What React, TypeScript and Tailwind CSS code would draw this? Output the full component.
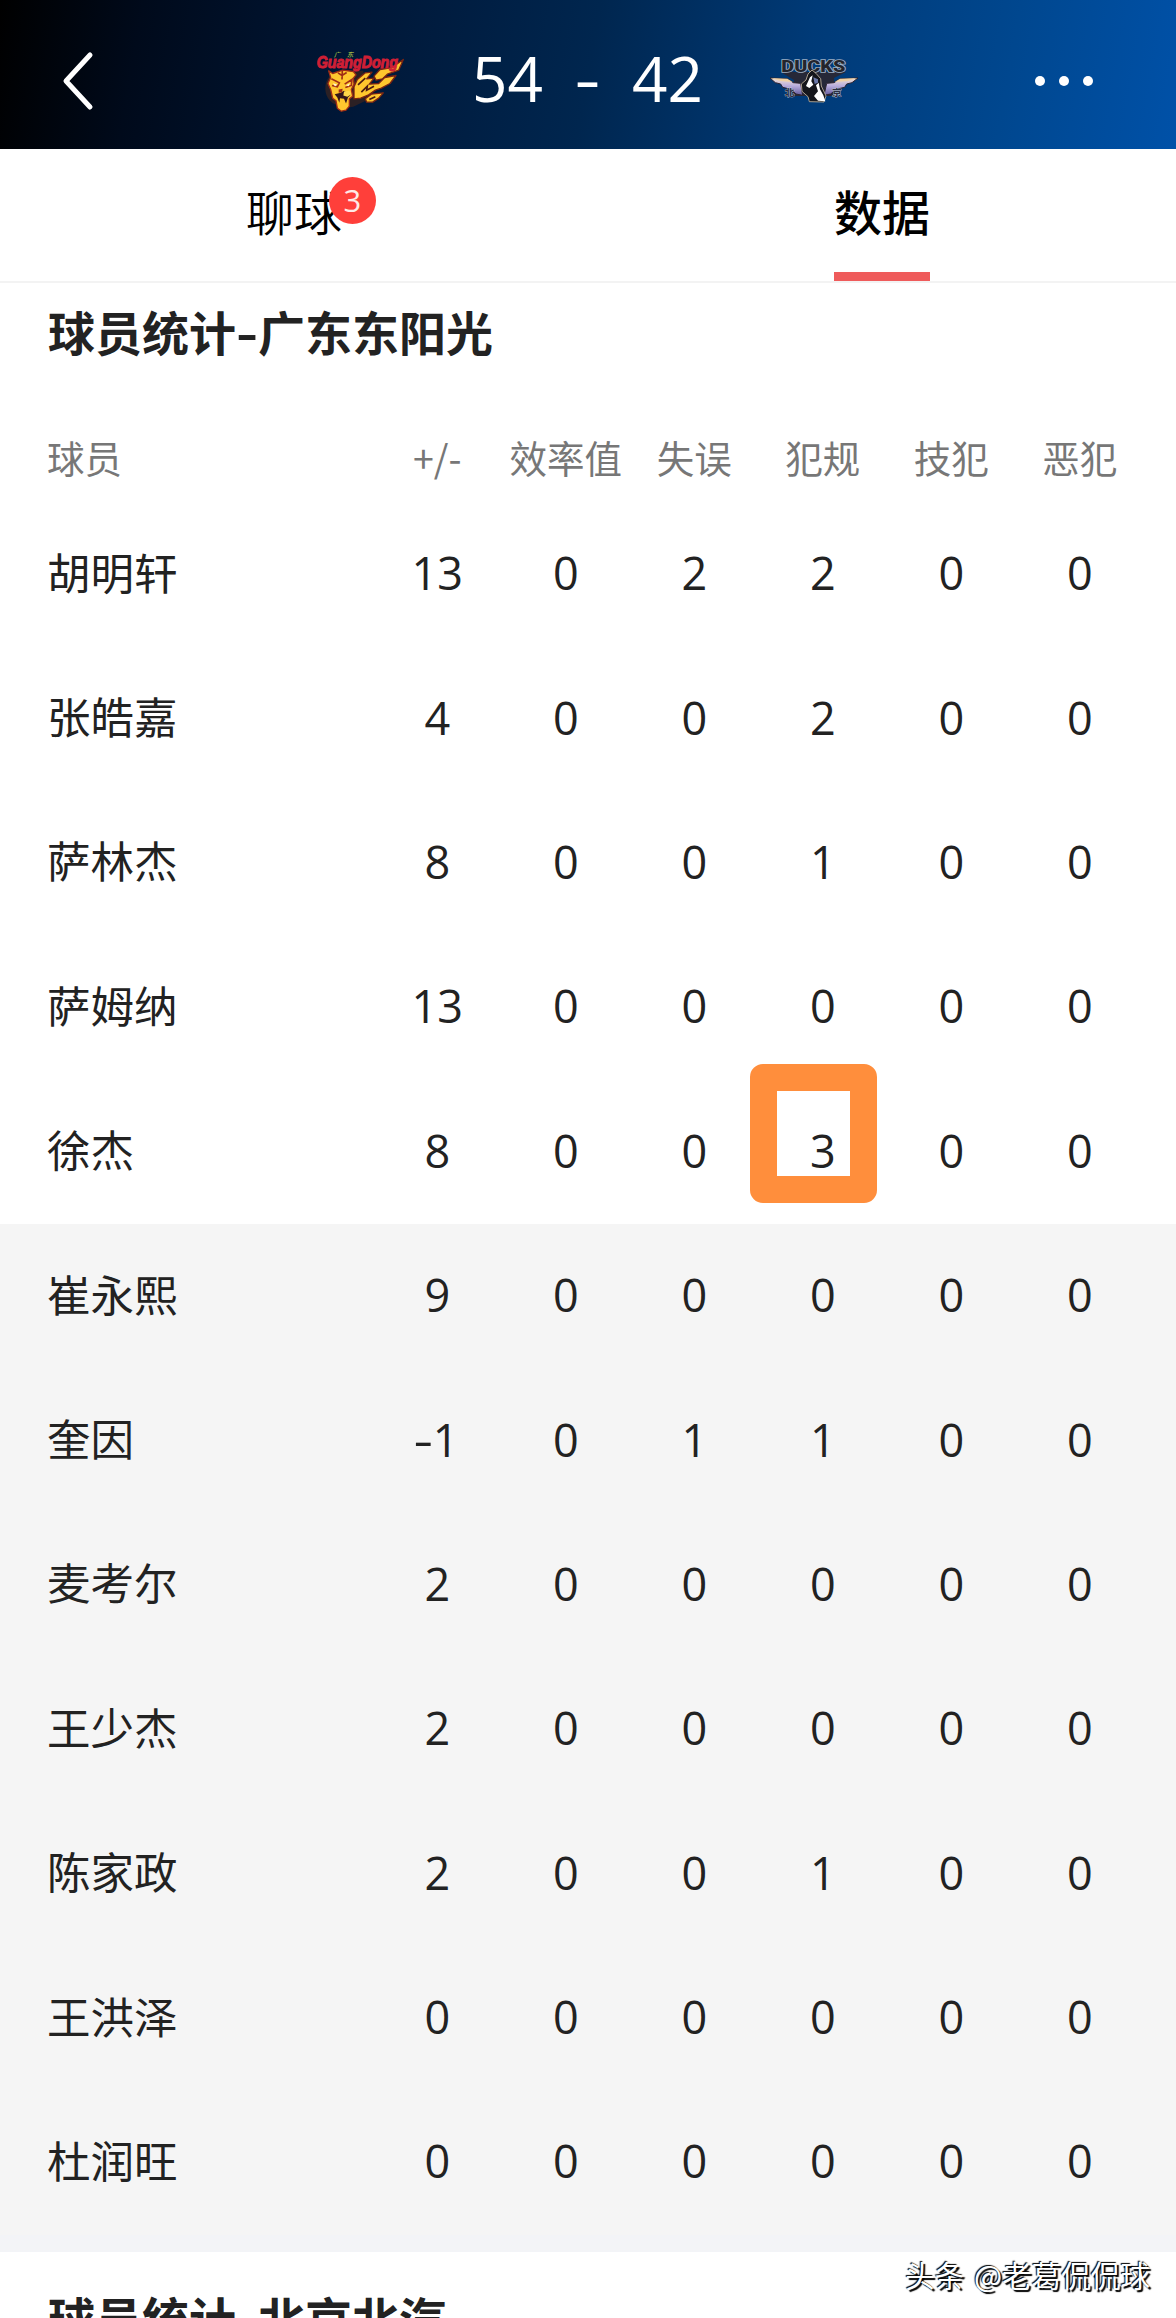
const columns = ['+/-', '效率值', '失误', '犯规', '技犯', '恶犯'];

const starters = [
  { name: '胡明轩', stats: [13, 0, 2, 2, 0, 0] },
  { name: '张皓嘉', stats: [4, 0, 0, 2, 0, 0] },
  { name: '萨林杰', stats: [8, 0, 0, 1, 0, 0] },
  { name: '萨姆纳', stats: [13, 0, 0, 0, 0, 0] },
  { name: '徐杰', stats: [8, 0, 0, 3, 0, 0], highlight: 3 },
];

const bench = [
  { name: '崔永熙', stats: [9, 0, 0, 0, 0, 0] },
  { name: '奎因', stats: [-1, 0, 1, 1, 0, 0] },
  { name: '麦考尔', stats: [2, 0, 0, 0, 0, 0] },
  { name: '王少杰', stats: [2, 0, 0, 0, 0, 0] },
  { name: '陈家政', stats: [2, 0, 0, 1, 0, 0] },
  { name: '王洪泽', stats: [0, 0, 0, 0, 0, 0] },
  { name: '杜润旺', stats: [0, 0, 0, 0, 0, 0] },
];

type Player = { name: string; stats: number[]; highlight?: number };

function TigersLogo() {
  return (
    <svg width={90} height={67} viewBox="45 40 270 200" className="shrink-0">
      <ellipse cx="122" cy="160" rx="46" ry="52" fill="#2b2024" />
      <path d="M130 110 L190 108 L200 196 L160 216 L130 220 Z" fill="#2b2024" />
      {/* flames */}
      <g fill="#ffc72e" stroke="#7a2412" strokeWidth="4" strokeLinejoin="round">
        <path d="M222 124 L240 104 L276 98 L310 74 L296 106 L262 118 L248 132 L228 136 Z" />
        <path d="M162 156 L172 134 L196 114 L216 112 L200 132 L222 130 L208 148 L236 146 L254 128 L288 122 L270 146 L244 160 L226 166 L206 180 L182 190 L162 192 Z" />
        <path d="M196 192 L214 178 L250 174 L236 190 L218 202 L200 202 Z" />
      </g>
      <path d="M184 172 L202 154 L200 166 L222 154 M174 150 L196 130 M208 194 L226 186" fill="none" stroke="#4a1a12" strokeWidth="5" />
      {/* head */}
      <path d="M86 108 L98 116 L128 106 L160 110 L168 120 L160 130 L162 148 L154 164 L158 184 L148 192 L148 214 L138 226 L124 229 L112 220 L108 198 L98 190 L92 164 L84 146 L92 128 Z" fill="#ffc72e" stroke="#a02e16" strokeWidth="4" strokeLinejoin="round" />
      <path d="M114 114 L126 122 L140 113 M127 108 L126 134 M94 132 L118 144 L112 156 L96 152 M134 148 L156 134 L154 152 L136 158" fill="none" stroke="#a02e16" strokeWidth="5" />
      <path d="M104 178 L122 174 L132 168 L152 180 L144 188 L138 206 L132 192 L120 190 L118 204 L112 188 Z" fill="#35161a" />
      <path d="M132 170 L148 168 L154 178 L142 186 L130 182 Z" fill="#ffd84a" />
      <path d="M116 164 L128 162 L126 172 L116 174 Z" fill="#a02e16" />
      <path d="M99 145 L111 149 L105 155 Z M138 151 L150 145 L146 154 Z" fill="#fff6d8" />
      <text x="102" y="67" textLength="58" fontSize="19" fill="#d8e84a" fontStyle="italic" fontFamily="'Noto Sans CJK SC', sans-serif">广 东</text>
      <text x="50" y="99" textLength="244" lengthAdjust="spacingAndGlyphs" fontSize="47" fontWeight="700" fontStyle="italic" fill="#d01f35" stroke="#d01f35" strokeWidth="3" fontFamily="'Liberation Sans', sans-serif">GuangDong</text>
    </svg>
  );
}

function DucksLogo() {
  return (
    <svg width={90} height={50} viewBox="57 70 270 150" className="shrink-0">
      {/* wings */}
      <defs>
        <linearGradient id="wing" x1="0" y1="0" x2="0" y2="1">
          <stop offset="0" stopColor="#f3e2d0" />
          <stop offset="0.45" stopColor="#b9aede" />
          <stop offset="1" stopColor="#62599b" />
        </linearGradient>
      </defs>
      <path d="M92 118 L288 118 L252 136 L256 190 L126 190 L132 142 Z" fill="#262838" />
      <g fill="url(#wing)" stroke="#2b2430" strokeWidth="3">
        <path d="M60 136 L112 138 L130 150 L152 152 L158 188 L138 184 L122 170 L98 164 L92 154 L76 150 Z" />
        <path d="M324 136 L270 138 L252 150 L230 152 L222 188 L242 184 L258 170 L284 164 L290 154 L306 150 Z" />
      </g>
      <path d="M62 136 L112 138 L128 148 L92 145 Z M322 136 L270 138 L254 148 L292 145 Z" fill="#efd2a6" />
      <text x="94" y="118" textLength="192" lengthAdjust="spacingAndGlyphs" fontSize="50" fontWeight="900" fill="#24252c" stroke="#9fb0c4" strokeWidth="5" paintOrder="stroke" fontFamily="Roboto, sans-serif">DUCKS</text>
      {/* duck */}
      <path d="M174 124 L186 112 L198 122 L212 138 L214 160 L228 190 L222 208 L178 207 L174 192 L156 176 L154 154 L168 142 Z" fill="#15161c" stroke="#c5b7a0" strokeWidth="2.5" />
      <path d="M180 134 L188 128 L184 146 L190 156 L178 166 L168 160 Z M198 158 L206 150 L210 170 L220 188 L226 206 L204 204 L192 190 L204 176 Z" fill="#fff" />
      <path d="M190 134 L204 140 L204 150 L194 154 Z" fill="#6b78a8" />
      <text x="104" y="190" fontSize="29" fontWeight="700" fill="#2a2f42" stroke="#c8cede" strokeWidth="2" paintOrder="stroke" fontFamily="'Noto Sans CJK SC', sans-serif">北</text>
      <text x="246" y="190" fontSize="29" fontWeight="700" fill="#2a2f42" stroke="#c8cede" strokeWidth="2" paintOrder="stroke" fontFamily="'Noto Sans CJK SC', sans-serif">京</text>
    </svg>
  );
}

function ScoreBar() {
  return (
    <header className="flex items-center h-[149px] pt-[13px] text-white bg-[linear-gradient(100deg,#000_0%,#000a1b_12%,#001737_30%,#00264f_50%,#003a77_68%,#00478f_85%,#0051a8_100%)]">
      <svg width={35} height={60} viewBox="0 0 35 60" fill="none" stroke="#fff" strokeWidth={5} strokeLinecap="round" strokeLinejoin="round" className="ml-[60px] shrink-0">
        <path d="M30 4 L6 30 L30 56" />
      </svg>
      <div className="ml-[220px] flex items-center">
        <TigersLogo />
      </div>
      <div className="ml-[67px] mb-[6px] flex items-center h-[70px] text-[62px] leading-[70px] font-['Open_Sans','Noto_Sans',sans-serif]">
        <span className="w-[71px]">54</span>
        <span className="w-[89px] text-center scale-x-[1.3]">-</span>
        <span className="w-[71px]">42</span>
      </div>
      <div className="ml-[66px] flex items-center">
        <DucksLogo />
      </div>
      <div className="ml-auto mr-[83px] flex gap-[14px]">
        <i className="w-[10px] h-[10px] rounded-full bg-white" />
        <i className="w-[10px] h-[10px] rounded-full bg-white" />
        <i className="w-[10px] h-[10px] rounded-full bg-white" />
      </div>
    </header>
  );
}

function Tabs() {
  return (
    <nav className="flex h-[134px] border-b-2 border-[#f3f3f3] text-[48px] leading-[70px] text-black">
      <div className="flex-1 flex justify-center pt-[26px]">
        <div className="relative h-[70px] [font-weight:350]">
          聊球
          <span className="absolute left-[83px] top-[2px] w-[47px] h-[47px] rounded-full bg-[#ff3f3a] text-[#ffe9e6] text-[31px] leading-[46px] text-center font-normal font-['Open_Sans','Noto_Sans',sans-serif]">3</span>
        </div>
      </div>
      <div className="flex-1 flex justify-center pt-[26px]">
        <div className="flex flex-col justify-between font-medium">
          数据
          <div className="h-[9px] bg-[#ef5b5b]" />
        </div>
      </div>
    </nav>
  );
}

function SectionTitle({ team }: { team: string }) {
  return (
    <h2 className="flex px-[48px] text-[47px] leading-[60px] font-bold whitespace-nowrap">
      球员统计
      <span className="w-[22px] text-center scale-x-[1.3]">-</span>
      {team}
    </h2>
  );
}

function PlayerRow({ player }: { player: Player }) {
  return (
    <div className="flex items-center h-[144.4px] pl-[47px]">
      <div className="w-[326px] mb-[5px] text-[43.5px] leading-[60px]">{player.name}</div>
      {player.stats.map((value, i) => (
        <div key={i} className="relative w-[128.5px] mb-[2px] text-center text-[45px] leading-[60px] font-['Open_Sans','Noto_Sans',sans-serif]">
          {value < 0 && <span className="inline-block mr-[2px] scale-x-[1.35]">-</span>}
          {Math.abs(value)}
          {player.highlight === i && (
            <div className="absolute -left-[9px] -top-[57px] w-[127px] h-[139px] rounded-[13px] border-[27px] border-[#ff8e3c]" />
          )}
        </div>
      ))}
    </div>
  );
}

export default function App() {
  return (
    <div className="relative w-[1176px] h-[2318px] overflow-hidden bg-white text-[#222] font-['Noto_Sans_CJK_SC',sans-serif]">
      <ScoreBar />
      <Tabs />

      <section>
        <div className="h-[131px] pt-[18px]">
          <SectionTitle team="广东东阳光" />
        </div>
        <div className="flex items-center h-[88px] pb-[2px] pl-[47px] text-[37.5px] leading-[60px] text-[#777]">
          <div className="w-[326px]">球员</div>
          {columns.map((c) => (
            <div key={c} className="w-[128.5px] text-center whitespace-nowrap">{c}</div>
          ))}
        </div>
        {starters.map((p) => (
          <PlayerRow key={p.name} player={p} />
        ))}
        <div className="bg-[#f5f5f5]">
          {bench.map((p) => (
            <PlayerRow key={p.name} player={p} />
          ))}
        </div>
        <div className="h-[17px] bg-[#f3f4f7]" />
      </section>

      <section className="pt-[35px]">
        <SectionTitle team="北京北汽" />
      </section>

      <div className="absolute right-[26px] bottom-[23px] text-[29.6px] leading-[40px] text-white whitespace-nowrap [word-spacing:3px] [text-shadow:-1px_-1px_1px_#000,2px_2px_1px_#000]">
        头条 @老葛侃侃球
      </div>
    </div>
  );
}
